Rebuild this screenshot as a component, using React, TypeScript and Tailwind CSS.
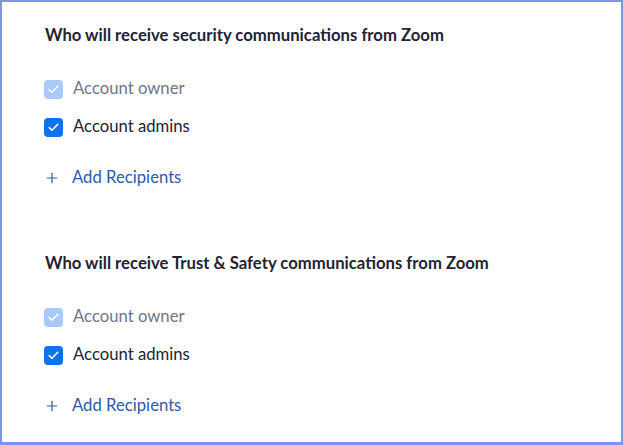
import { Check, Plus } from "lucide-react"

const SECTIONS = [
  "Who will receive security communications from Zoom",
  "Who will receive Trust & Safety communications from Zoom",
]

function Box({ disabled }: { disabled?: boolean }) {
  return (
    <span
      className={[
        "flex h-[19px] w-[19px] shrink-0 items-center justify-center rounded-[4px]",
        disabled ? "bg-[#a9c9f7]" : "bg-[#0e72ed]",
      ].join(" ")}
    >
      <Check className="h-[13px] w-[13px] text-white" strokeWidth={3} aria-hidden="true" />
    </span>
  )
}

export default function App() {
  return (
    <div
      className="box-border h-[445px] w-[623px] border-2 border-b-[3px] border-[#7f93f1] bg-white pl-[42px] pt-[24px]"
      style={{ fontFamily: "Lato, 'Noto Sans', sans-serif" }}
    >
      {SECTIONS.map((title, i) => (
        <section key={title} className={i > 0 ? "mt-[64px]" : ""}>
          <h2 className="flex h-5 items-center pl-[1px] text-[16.7px] font-bold text-[#232333]">{title}</h2>

          <div className="mt-[31px] flex h-6 items-center gap-[10px]">
            <Box disabled />
            <span className="text-[16.7px] text-[#747487]">Account owner</span>
          </div>

          <div className="mt-[14px] flex h-6 items-center gap-[10px]">
            <Box />
            <span className="text-[16.7px] text-[#232333]">Account admins</span>
          </div>

          <button className="mt-[27px] flex h-6 items-center gap-[12px] text-[16.7px] text-[#2d5ba7]">
            <Plus className="h-4 w-4" strokeWidth={1.8} aria-hidden="true" />
            Add Recipients
          </button>
        </section>
      ))}
    </div>
  )
}
